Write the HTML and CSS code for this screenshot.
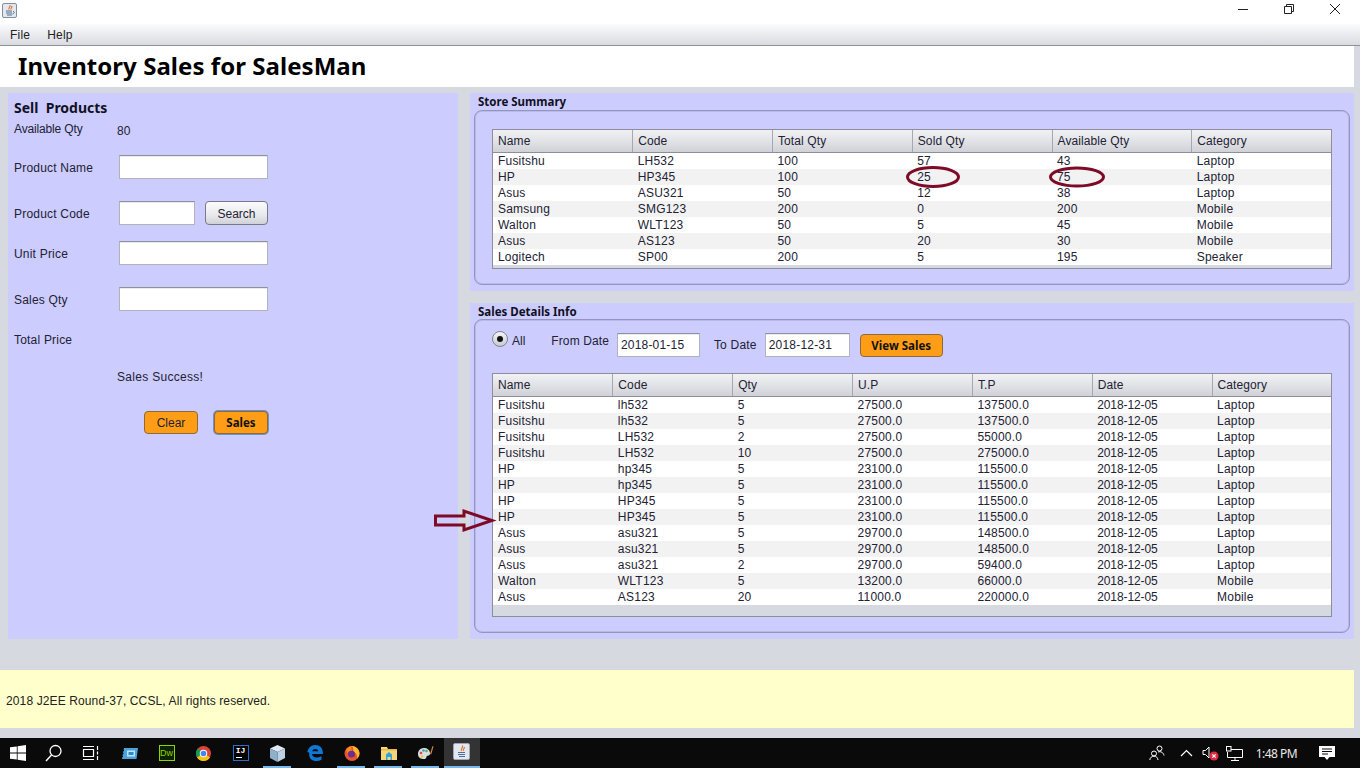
FILE: index.html
```html
<!DOCTYPE html>
<html lang="en">
<head>
<meta charset="utf-8">
<title>Inventory Sales for SalesMan</title>
<link rel="stylesheet" href="styles.css">
</head>
<body>
<div class="titlebar">
  <svg class="app-icon" width="18" height="18" viewBox="0 0 18 18"><rect x="2.500" y="3.500" width="14" height="14" rx="1.500" fill="#e4e8ee" stroke="#7f8fa3"/><path d="M10 5c1 1.500-2 2.500-1 4.500M12 6c0 1.500-1.500 2-1 3.500" fill="none" stroke="#e2752b" stroke-width="1.200"/><path d="M6 11h6M6 13h6M7 15h5" stroke="#4a6f96" stroke-width="1.100"/><path d="M13 11.500c2 0 1.500 2-.5 2.500" fill="none" stroke="#4a6f96"/></svg>
  <div class="winbtns">
    <svg width="12" height="12" viewBox="0 0 12 12"><path d="M1 6.500h10" stroke="#222" stroke-width="1"/></svg>
    <svg width="12" height="12" viewBox="0 0 12 12"><path d="M1.500 3.500h7v7h-7zM3.500 3.500v-2h7v7h-2" fill="none" stroke="#222"/></svg>
    <svg width="12" height="12" viewBox="0 0 12 12"><path d="M1 1l10 10M11 1L1 11" stroke="#222" stroke-width="1"/></svg>
  </div>
</div>
<nav class="menubar"><span class="menu-item">File</span><span class="menu-item">Help</span></nav>
<header class="app-header"><h1 class="app-title">Inventory Sales for SalesMan</h1></header>

<main class="content">
  <section class="sell">
    <h2 class="sell-title">Sell&nbsp; Products</h2>
    <div class="row-avail"><span class="label label-avail">Available Qty</span><span class="avail-value">80</span></div>
    <div class="row row-name"><span class="label">Product Name</span><span class="field field-wide"></span></div>
    <div class="row row-code"><span class="label">Product Code</span><span class="field field-short"></span><button class="btn btn-search">Search</button></div>
    <div class="row row-price"><span class="label">Unit Price</span><span class="field field-wide"></span></div>
    <div class="row row-qty"><span class="label">Sales Qty</span><span class="field field-wide"></span></div>
    <div class="row row-total"><span class="label label-flat">Total Price</span></div>
    <div class="row row-success"><span class="success">Sales Success!</span></div>
    <div class="row row-actions"><button class="btn btn-orange btn-clear">Clear</button><button class="btn btn-orange btn-sales">Sales</button></div>
  </section>

  <div class="side">
    <section class="group group-store">
      <h3 class="group-title">Store Summary</h3>
      <div class="group-box box-store">
        <div class="tbl-wrap wrap-store">
          <table class="tbl tbl-store">
            <thead><tr><th>Name</th><th>Code</th><th>Total Qty</th><th>Sold Qty</th><th>Available Qty</th><th>Category</th></tr></thead>
            <tbody>
              <tr><td>Fusitshu</td><td>LH532</td><td>100</td><td>57</td><td>43</td><td>Laptop</td></tr>
              <tr><td>HP</td><td>HP345</td><td>100</td><td>25</td><td>75</td><td>Laptop</td></tr>
              <tr><td>Asus</td><td>ASU321</td><td>50</td><td>12</td><td>38</td><td>Laptop</td></tr>
              <tr><td>Samsung</td><td>SMG123</td><td>200</td><td>0</td><td>200</td><td>Mobile</td></tr>
              <tr><td>Walton</td><td>WLT123</td><td>50</td><td>5</td><td>45</td><td>Mobile</td></tr>
              <tr><td>Asus</td><td>AS123</td><td>50</td><td>20</td><td>30</td><td>Mobile</td></tr>
              <tr><td>Logitech</td><td>SP00</td><td>200</td><td>5</td><td>195</td><td>Speaker</td></tr>
            </tbody>
          </table>
        </div>
      </div>
    </section>

    <section class="group group-sales">
      <h3 class="group-title">Sales Details Info</h3>
      <div class="group-box box-sales">
        <div class="filters">
          <span class="radio"><span class="radio-dot"></span></span>
          <span class="f-all">All</span>
          <span class="f-from">From Date</span>
          <span class="field date date-from">2018-01-15</span>
          <span class="f-to">To Date</span>
          <span class="field date date-to">2018-12-31</span>
          <button class="btn btn-orange btn-view">View Sales</button>
        </div>
        <div class="tbl-wrap wrap-sales">
          <table class="tbl tbl-sales">
            <thead><tr><th>Name</th><th>Code</th><th>Qty</th><th>U.P</th><th>T.P</th><th>Date</th><th>Category</th></tr></thead>
            <tbody>
              <tr><td>Fusitshu</td><td>lh532</td><td>5</td><td>27500.0</td><td>137500.0</td><td>2018-12-05</td><td>Laptop</td></tr>
              <tr><td>Fusitshu</td><td>lh532</td><td>5</td><td>27500.0</td><td>137500.0</td><td>2018-12-05</td><td>Laptop</td></tr>
              <tr><td>Fusitshu</td><td>LH532</td><td>2</td><td>27500.0</td><td>55000.0</td><td>2018-12-05</td><td>Laptop</td></tr>
              <tr><td>Fusitshu</td><td>LH532</td><td>10</td><td>27500.0</td><td>275000.0</td><td>2018-12-05</td><td>Laptop</td></tr>
              <tr><td>HP</td><td>hp345</td><td>5</td><td>23100.0</td><td>115500.0</td><td>2018-12-05</td><td>Laptop</td></tr>
              <tr><td>HP</td><td>hp345</td><td>5</td><td>23100.0</td><td>115500.0</td><td>2018-12-05</td><td>Laptop</td></tr>
              <tr><td>HP</td><td>HP345</td><td>5</td><td>23100.0</td><td>115500.0</td><td>2018-12-05</td><td>Laptop</td></tr>
              <tr><td>HP</td><td>HP345</td><td>5</td><td>23100.0</td><td>115500.0</td><td>2018-12-05</td><td>Laptop</td></tr>
              <tr><td>Asus</td><td>asu321</td><td>5</td><td>29700.0</td><td>148500.0</td><td>2018-12-05</td><td>Laptop</td></tr>
              <tr><td>Asus</td><td>asu321</td><td>5</td><td>29700.0</td><td>148500.0</td><td>2018-12-05</td><td>Laptop</td></tr>
              <tr><td>Asus</td><td>asu321</td><td>2</td><td>29700.0</td><td>59400.0</td><td>2018-12-05</td><td>Laptop</td></tr>
              <tr><td>Walton</td><td>WLT123</td><td>5</td><td>13200.0</td><td>66000.0</td><td>2018-12-05</td><td>Mobile</td></tr>
              <tr><td>Asus</td><td>AS123</td><td>20</td><td>11000.0</td><td>220000.0</td><td>2018-12-05</td><td>Mobile</td></tr>
            </tbody>
          </table>
        </div>
      </div>
    </section>
  </div>
</main>

<footer class="app-footer">2018 J2EE Round-37, CCSL, All rights reserved.</footer>

<div class="taskbar">
  <div class="tb-left">
    <span class="tb-slot tb-sys"><svg width="16" height="16" viewBox="0 0 16 16"><path fill="#fff" d="M0 2.300l6.800-.9v6.200H0zM7.600 1.300L16 0v7.600H7.600zM0 8.400h6.800v6.200L0 13.700zM7.600 8.400H16V16l-8.400-1.200z"/></svg></span>
    <span class="tb-slot tb-sys"><svg width="18" height="18" viewBox="0 0 18 18"><circle cx="10.500" cy="7" r="5.500" fill="none" stroke="#fff" stroke-width="1.300"/><path d="M6.500 11L1 17" stroke="#fff" stroke-width="1.400"/></svg></span>
    <span class="tb-slot tb-sys"><svg width="17" height="16" viewBox="0 0 17 16"><path d="M1.500 4.500h10v7h-10zM1 1.500h11M1 14.500h11M15.500 1v4M15.500 6.500v3M15.500 11v4" fill="none" stroke="#fff" stroke-width="1.200"/></svg></span>
    <span class="tb-slot tb-first"><svg width="17" height="13" viewBox="0 0 17 13"><path fill="#4aa3df" d="M3 1h14l-1.500 11H1z"/><path fill="#0a0a0a" d="M0 3h3v1H0zM0 6h2.500v1H0zM0 9h2v1H0z"/><rect x="6" y="3.500" width="8" height="6" fill="#bfe3f7"/><rect x="7.500" y="5" width="5" height="3" fill="#2f87c4"/></svg></span>
    <span class="tb-slot"><span class="dw">Dw</span></span>
    <span class="tb-slot"><svg width="15" height="15" viewBox="0 0 32 32"><circle cx="16" cy="16" r="16" fill="#db4437"/><path d="M16 16L2 24A16 16 0 0 1 4 5.500z" fill="#0f9d58"/><path d="M16 16l14 8a16 16 0 0 1-14 8 16 16 0 0 1-14-8z" fill="#f4c20d"/><circle cx="16" cy="16" r="8" fill="#fff"/><circle cx="16" cy="16" r="6" fill="#4285f4"/></svg></span>
    <span class="tb-slot"><span class="ij">IJ<i class="ij-bar"></i></span></span>
    <span class="tb-slot active"><svg width="15" height="17" viewBox="0 0 15 17"><path fill="#dfe9f2" d="M7.500 0L15 3.500 7.500 7 0 3.500z"/><path fill="#8fb0cc" d="M0 3.500L7.500 7v10L0 13z"/><path fill="#bcd2e4" d="M15 3.500L7.500 7v10l7.500-4z"/></svg></span>
    <span class="tb-slot"><svg width="16" height="16" viewBox="0 0 16 16"><path fill="#0f78d4" d="M.3 7.500C1 3 4 0 8.200 0 13 0 16 3.200 16 9H5c.2 3.500 5 4.500 9.500 2.200v3.500C9 17.500 1.500 15.500 2.300 9 2.300 7.500 1.500 7 .3 7.500zM5.200 6.300h6C11 3.500 6 3.300 5.200 6.300z"/></svg></span>
    <span class="tb-slot active"><svg width="16" height="16" viewBox="0 0 16 16"><circle cx="8" cy="8.500" r="7.500" fill="#e8542b"/><path d="M8 1c4 .5 7.500 3.500 7.500 7.500 0 2-1 4-2.500 5 .8-3-1-6-4-6.500C9.500 5 9.500 3 8 1z" fill="#fbb829"/><circle cx="7.500" cy="9" r="3.500" fill="#6d2f8f"/><path d="M2 5c2-3 4-4 6-4-1 1.500-1 3 0 4.500-2 0-4 1-4.500 3C3 7.500 2.500 6 2 5z" fill="#f58a23"/></svg></span>
    <span class="tb-slot active"><svg width="16" height="14" viewBox="0 0 16 14"><path fill="#f5d77a" d="M0 1h6l1 2h9v11H0z"/><path fill="#e8b93f" d="M0 3h16v1.500H0z"/><path fill="#37a2d8" d="M5 8.500l3-2.500 3 2.500V14H9.500v-3h-3v3H5z"/></svg></span>
    <span class="tb-slot active"><svg width="17" height="16" viewBox="0 0 17 16"><path fill="#d8dde2" d="M1 9c0-4 3-6 6-6s6 2 6 5-2 2.500-3 3 0 3-3 3-6-1-6-5z"/><circle cx="4" cy="8" r="1.300" fill="#e04b3a"/><circle cx="6.500" cy="5.500" r="1.300" fill="#3f9bd6"/><circle cx="9.500" cy="6" r="1.300" fill="#5db14b"/><circle cx="5" cy="11.500" r="1.300" fill="#f2c230"/><path d="M13 9l2.500-8 1 .4L14.200 9.500z" fill="#d98a3c"/></svg></span>
    <span class="tb-slot tb-java"><svg width="18" height="18" viewBox="0 0 18 18"><rect x=".5" y=".5" width="16" height="16" rx="1.500" fill="#e4e8ee" stroke="#9ba8b7"/><path d="M9.500 2.500c1 1.800-2 3-1 5.500M11.500 4c0 1.500-1.500 2-1 3.800" fill="none" stroke="#e2752b" stroke-width="1.200"/><path d="M5 9.500h7M5 11.500h7M6 13.500h6" stroke="#4a6f96" stroke-width="1.100"/></svg></span>
  </div>
  <div class="tray">
    <svg class="tray-people" width="16" height="16" viewBox="0 0 16 16"><circle cx="5" cy="8.500" r="2.500" fill="none" stroke="#fff"/><path d="M.8 15c.3-2.500 2-3.800 4.200-3.800s3.700 1.300 4 3.800" fill="none" stroke="#fff"/><circle cx="10.500" cy="3.500" r="2.500" fill="none" stroke="#fff"/><path d="M9 7c2.800-1 5.500.6 6 3.500" fill="none" stroke="#fff"/></svg>
    <svg class="tray-chev" width="13" height="8" viewBox="0 0 13 8"><path d="M1 7l5.500-5.500L12 7" fill="none" stroke="#fff" stroke-width="1.200"/></svg>
    <svg class="tray-sound" width="17" height="16" viewBox="0 0 17 16"><path d="M1 5.500h2.500L7 2v11L3.500 9.500H1z" fill="none" stroke="#fff"/><circle cx="12" cy="11" r="4.500" fill="#e02b3f"/><path d="M10.300 9.300l3.400 3.400M13.700 9.300l-3.400 3.400" stroke="#fff" stroke-width="1.200"/></svg>
    <svg class="tray-net" width="17" height="15" viewBox="0 0 17 15"><path d="M4 3.500h12.500v8h-15V6M9 11.500v2.500M5 14.500h8" fill="none" stroke="#fff"/><rect x=".5" y=".5" width="4.500" height="4.500" fill="#0a0a0a" stroke="#fff"/></svg>
    <span class="clock">1:48 PM</span>
    <svg class="tray-note" width="16" height="16" viewBox="0 0 16 16"><path fill="#fff" d="M0 1h16v11h-5.500L8 15l-2.500-3H0z"/><path d="M3 4h10M3 6.500h10M3 9h6" stroke="#0a0a0a"/></svg>
  </div>
</div>

<svg class="annotations" width="1360" height="768" viewBox="0 0 1360 768">
  <ellipse cx="933" cy="177" rx="25.500" ry="9.500" fill="none" stroke="#7d0a26" stroke-width="3"/>
  <ellipse cx="1077" cy="177" rx="26.500" ry="9" fill="none" stroke="#7d0a26" stroke-width="3"/>
  <path d="M435.500 516h28.500V511L492 520.500l-28 9.500v-5h-28.500z" fill="none" stroke="#7d0a26" stroke-width="3"/>
</svg>
</body>
</html>
```

FILE: styles.css
```css
* { box-sizing: border-box; }
html, body { margin: 0; padding: 0; }
body {
  width: 1360px;
  height: 768px;
  overflow: hidden;
  background: #d6d9df;
  position: relative;
  display: flex;
  flex-direction: column;
  font-family: "Liberation Sans", Arial, sans-serif;
  font-size: 12px;
  color: #222233;
}
h1, h2, h3 { margin: 0; }

.titlebar {
  height: 24px;
  background: #fff;
  display: flex;
  align-items: center;
  justify-content: space-between;
}
.app-icon { margin-top: -6px; }
.winbtns { display: flex; gap: 34px; padding-right: 19px; margin-top: -6px; }

.menubar {
  height: 22px;
  background: linear-gradient(#fbfbfc, #e9eaee 55%, #d9dbe1);
  border-bottom: 1px solid #8e919b;
  display: flex;
  align-items: center;
  padding-left: 10px;
  gap: 17px;
  font-size: 12px;
  letter-spacing: .2px;
  color: #222;
}

.app-header {
  width: 1354px;
  height: 41px;
  background: #fff;
  display: flex;
  align-items: center;
  padding: 0 0 2px 18px;
}
.app-title {
  font-family: "Noto Sans", sans-serif;
  font-size: 24px;
  font-weight: 700;
  line-height: 30px;
  letter-spacing: .05px;
  color: #000;
}

.content {
  height: 583px;
  padding: 6px 6px 0 8px;
  display: flex;
  gap: 12px;
}
.sell {
  width: 450px;
  height: 546px;
  background: #ccccff;
  padding: 7px 0 0 6px;
}
.sell-title {
  font-family: "Noto Sans", sans-serif;
  font-size: 14px;
  font-weight: 700;
  line-height: 16px;
  height: 16px;
  color: #111122;
}
.row-avail { display: flex; align-items: flex-start; height: 16px; margin-top: 5px; line-height: 16px; }
.avail-value { margin-top: 2px; margin-left: -2px; }
.label { width: 105px; flex: none; padding-top: 2px; letter-spacing: .2px; }
.label-avail { padding-top: 0; letter-spacing: -.15px; }
.label-flat { padding-top: 0; }
.row { display: flex; align-items: center; height: 24px; }
.row-name { margin-top: 18px; }
.row-code { margin-top: 22px; }
.row-price { margin-top: 16px; }
.row-qty { margin-top: 22px; }
.row-total { margin-top: 17px; }
.row-success { margin-top: 13px; padding-left: 103px; }
.success { letter-spacing: .3px; }
.row-actions { margin-top: 21px; padding-left: 130px; gap: 16px; }

.field {
  display: block;
  height: 24px;
  background: #fff;
  border: 1px solid #b0b3bd;
  border-top-color: #8e919b;
  box-shadow: inset 0 1px 0 #e8e8ee;
}
.field-wide { width: 149px; }
.field-short { width: 76px; }

.btn {
  font-family: "Liberation Sans", Arial, sans-serif;
  font-size: 12px;
  color: #222233;
  padding: 1px 0 0;
  border-radius: 4px;
  border: 1px solid #777a85;
  cursor: default;
}
.btn-search {
  width: 63px;
  height: 24px;
  margin-left: 10px;
  background: linear-gradient(#fbfbfc, #e8e9ec 60%, #cfd1d7);
}
.btn-orange { background: #ff9e16; border-color: #8d6a3a; height: 23px; }
.btn-clear { width: 54px; }
.btn-sales {
  width: 54px;
  padding-top: 0;
  font-family: "Noto Sans", sans-serif;
  font-size: 11.500px;
  font-weight: 700;
  color: #111;
  box-shadow: 0 0 0 1px #6d94c8;
}

.side { width: 884px; display: flex; flex-direction: column; gap: 12px; }
.group { background: #ccccff; padding: 1px 4px 6px; display: flex; flex-direction: column; }
.group-store { height: 198px; }
.group-sales { height: 336px; padding-top: 0; }
.group-title {
  height: 16px;
  line-height: 15px;
  padding-left: 4px;
  font-family: "Noto Sans", sans-serif;
  font-size: 11.500px;
  font-weight: 700;
  color: #111122;
}
.group-sales .group-title { line-height: 17px; }
.group-box {
  flex: 1;
  border: 1px solid #9294c2;
  border-radius: 8px;
  box-shadow: inset 0 0 0 1px #b9bbe6;
  padding: 0 17px;
}
.box-store { padding-top: 18px; }
.box-sales { padding-top: 13px; }

.tbl-wrap {
  width: 840px;
  border: 1px solid #8c8f99;
  background: #d6d9df;
  overflow: hidden;
}
.wrap-store { height: 140px; }
.wrap-sales { height: 244px; margin-top: 16px; }
.tbl {
  width: 839px;
  border-collapse: collapse;
  table-layout: fixed;
  font-size: 12px;
  color: #222233;
}
.tbl-store { width: 838.500px; }
.tbl th {
  height: 22px;
  padding: 0 0 0 5px;
  font-weight: 400;
  text-align: left;
  letter-spacing: .1px;
  background: linear-gradient(#f1f1f3, #e2e3e7 50%, #cfd1d6);
  border-right: 1px solid #a5a8b1;
  border-bottom: 1px solid #8c8f99;
}
.tbl th:last-child { border-right: 0; }
.tbl td {
  height: 16px;
  line-height: 16px;
  padding: 0 0 0 5px;
  background: #fff;
  white-space: nowrap;
  letter-spacing: .2px;
}
.tbl-sales td:nth-child(6) { letter-spacing: -.1px; }
.tbl tbody tr:nth-child(even) td { background: #f2f2f2; }

.filters { display: flex; align-items: center; height: 24px; }
.radio {
  width: 16px;
  height: 16px;
  margin-top: -12px;
  border-radius: 50%;
  border: 1px solid #7f8290;
  background: linear-gradient(#f5f5f7, #c8cad2);
  display: flex;
  align-items: center;
  justify-content: center;
}
.radio-dot { width: 6px; height: 6px; border-radius: 50%; background: #111; }
.f-all { margin-left: 4px; margin-top: -8px; }
.f-from { margin-left: 26px; margin-top: -8px; letter-spacing: .1px; }
.date { width: 83px; line-height: 22px; padding-left: 3px; margin-left: 8px; font-size: 12px; letter-spacing: .2px; }
.f-to { margin-left: 14px; letter-spacing: .2px; }
.date-to { width: 85px; margin-left: 8px; }
.btn-view {
  width: 83px;
  height: 23px;
  margin-left: 10px;
  margin-top: 1px;
  padding-top: 0;
  font-family: "Noto Sans", sans-serif;
  font-size: 11.500px;
  font-weight: 700;
  color: #111;
}

.app-footer {
  width: 1354px;
  height: 58px;
  background: #ffffcc;
  display: flex;
  align-items: center;
  padding: 4px 0 0 6px;
  letter-spacing: .12px;
  color: #222;
}

.taskbar {
  height: 30px;
  margin-top: 10px;
  background: #0a0a0a;
  display: flex;
  align-items: center;
  justify-content: space-between;
  color: #fff;
}
.tb-left { display: flex; height: 100%; }
.tb-slot {
  width: 37px;
  height: 100%;
  display: flex;
  align-items: center;
  justify-content: center;
  flex: none;
  position: relative;
}
.tb-sys { width: 36px; }
.tb-first { margin-left: 3px; }
.tb-slot.active::after {
  content: "";
  position: absolute;
  left: 4px;
  right: 5px;
  bottom: 0;
  height: 2px;
  background: #76b9ed;
}
.tb-java { background: #333; width: 36px; border-bottom: 2px solid #76b9ed; }
.dw {
  width: 16px;
  height: 16px;
  border: 1px solid #8fd400;
  background: #0c2200;
  color: #8fd400;
  font-size: 9px;
  line-height: 14px;
  text-align: center;
  font-family: "Liberation Sans", sans-serif;
}
.ij {
  width: 16px;
  height: 16px;
  border: 1px solid #2a6fc9;
  background: #000;
  color: #fff;
  font-size: 8px;
  font-weight: 700;
  line-height: 10px;
  text-align: center;
  position: relative;
  font-family: "Liberation Mono", monospace;
}
.ij-bar { position: absolute; left: 2px; bottom: 2px; width: 6px; height: 1px; background: #fff; }

.tray { display: flex; align-items: center; height: 100%; padding-right: 25px; }
.tray-chev { margin-left: 15px; }
.tray-sound { margin-left: 9px; }
.tray-net { margin-left: 7px; }
.clock { margin-left: 13px; font-family: "Noto Sans", sans-serif; font-size: 12px; letter-spacing: -.55px; color: #e8e8e8; }
.tray-note { margin-left: 22px; }

.annotations { position: absolute; left: 0; top: 0; pointer-events: none; }
```
